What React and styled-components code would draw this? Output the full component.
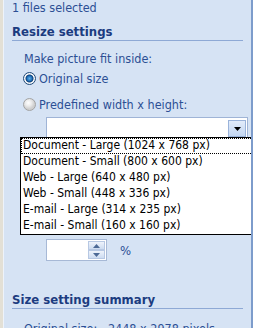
import React from "react"
import styled, { createGlobalStyle } from "styled-components"

const Global = createGlobalStyle`
  html, body {
    margin: 0;
    padding: 0;
    background: #d6e3f4;
  }
  body {
    font-family: "DejaVu Sans Condensed", "DejaVu Sans", sans-serif;
  }
`

const Panel = styled.div`
  position: relative;
  width: 253px;
  height: 328px;
  box-sizing: border-box;
  overflow: hidden;
  background: #d6e3f4;
  border-left: 3px solid #e3e0d6;
  border-right: 2px solid #7d9ccb;
  box-shadow: inset 1px 0 0 #eef3fa;
  padding: 0 8px 0 9px;
  font-size: 12.5px;
  color: #2c4f94;
`

const Selected = styled.div`
  line-height: 15px;
`

const SectionTitle = styled.div`
  margin-top: ${(p) => p.$top}px;
  font-weight: bold;
  font-size: 13px;
  line-height: 15px;
  color: #1c3c80;
  padding-bottom: 1px;
  border-bottom: 1px solid #8ea9d5;
`

const Label = styled.div`
  margin-top: 11px;
  padding-left: 12px;
  line-height: 14px;
`

const RadioRow = styled.div`
  display: flex;
  align-items: center;
  gap: 3px;
  margin-top: ${(p) => p.$top}px;
  padding-left: 11px;
  height: 15px;
`

const RadioDot = styled.span`
  width: 11px;
  height: 11px;
  border-radius: 50%;
  border: 1px solid ${(p) => (p.$checked ? "#1f4a7a" : "#a3a3a3")};
  background: ${(p) =>
    p.$checked
      ? "radial-gradient(circle at 50% 50%, #5fb0e8 0, #1f6fb8 2.5px, #0d3f78 3.5px, #ffffff 4.5px, #e8e8e8 6px)"
      : "radial-gradient(circle at 40% 35%, #ffffff 0, #ececec 3px, #cfcfcf 6px)"};
  flex: none;
`

const Combo = styled.div`
  display: flex;
  justify-content: flex-end;
  align-items: center;
  margin: 5px 0 0 34px;
  width: 202px;
  height: 23px;
  box-sizing: border-box;
  background: #ffffff;
  border: 1px solid #9fb4d6;
  padding-right: 1px;
`

const ArrowButton = styled.span`
  display: flex;
  align-items: center;
  justify-content: center;
  width: 18px;
  height: 17px;
  box-sizing: border-box;
  border: 1px solid #9ab3da;
  background: linear-gradient(#e2ecfa, #c3d6f2);
`

const List = styled.ul`
  position: absolute;
  left: 17px;
  top: 137px;
  width: 234px;
  margin: 0;
  padding: 0;
  list-style: none;
  box-sizing: border-box;
  background: #ffffff;
  border: 1px solid #000000;
  font-size: 12px;
  color: #000000;
  z-index: 2;
`

const Item = styled.li`
  height: 16px;
  line-height: 15px;
  padding-left: 2px;
  box-sizing: border-box;
  white-space: nowrap;
  outline: ${(p) => (p.$focused ? "1px dotted #000" : "none")};
  outline-offset: -1px;
`

const SpinRow = styled.div`
  display: flex;
  align-items: center;
  gap: 13px;
  margin: 99px 0 0 34px;
`

const SpinBox = styled.div`
  display: flex;
  justify-content: flex-end;
  width: 61px;
  height: 22px;
  box-sizing: border-box;
  background: #ffffff;
  border: 1px solid #a7b9d6;
  padding: 1px;
`

const SpinButtons = styled.div`
  display: flex;
  flex-direction: column;
  width: 17px;
`

const SpinHalf = styled.span`
  flex: 1;
  display: flex;
  align-items: center;
  justify-content: center;
  border: 1px solid #b7c8e3;
  background: linear-gradient(#eef3fb, #cddcf1);
`

const Percent = styled.span`
  font-size: 13px;
  color: #2c4f94;
`

const Summary = styled.div`
  margin-top: 13px;
  padding-left: 12px;
  line-height: 14px;
  white-space: pre;
`

const sizes = [
  "Document - Large (1024 x 768 px)",
  "Document - Small (800 x 600 px)",
  "Web - Large (640 x 480 px)",
  "Web - Small (448 x 336 px)",
  "E-mail - Large (314 x 235 px)",
  "E-mail - Small (160 x 160 px)",
]

const Tri = ({ up, color = "#000", w = 7, h = 4 }) => (
  <svg width={w} height={h} viewBox={`0 0 ${w} ${h}`}>
    <polygon
      points={up ? `0,${h} ${w},${h} ${w / 2},0` : `0,0 ${w},0 ${w / 2},${h}`}
      fill={color}
    />
  </svg>
)

export default function App() {
  return (
    <Panel>
      <Global />
      <Selected>1 files selected</Selected>
      <SectionTitle $top={9}>Resize settings</SectionTitle>
      <Label>Make picture fit inside:</Label>
      <RadioRow $top={5}>
        <RadioDot $checked />
        <span>Original size</span>
      </RadioRow>
      <RadioRow $top={11}>
        <RadioDot />
        <span>Predefined width x height:</span>
      </RadioRow>
      <Combo>
        <ArrowButton>
          <Tri />
        </ArrowButton>
      </Combo>
      <List>
        {sizes.map((s, i) => (
          <Item key={s} $focused={i === 0}>
            {s}
          </Item>
        ))}
      </List>
      <SpinRow>
        <SpinBox>
          <SpinButtons>
            <SpinHalf>
              <Tri up color="#4d6a96" />
            </SpinHalf>
            <SpinHalf>
              <Tri color="#4d6a96" />
            </SpinHalf>
          </SpinButtons>
        </SpinBox>
        <Percent>%</Percent>
      </SpinRow>
      <SectionTitle $top={31}>Size setting summary</SectionTitle>
      <Summary>Original size:   2448 x 2978 pixels</Summary>
    </Panel>
  )
}
